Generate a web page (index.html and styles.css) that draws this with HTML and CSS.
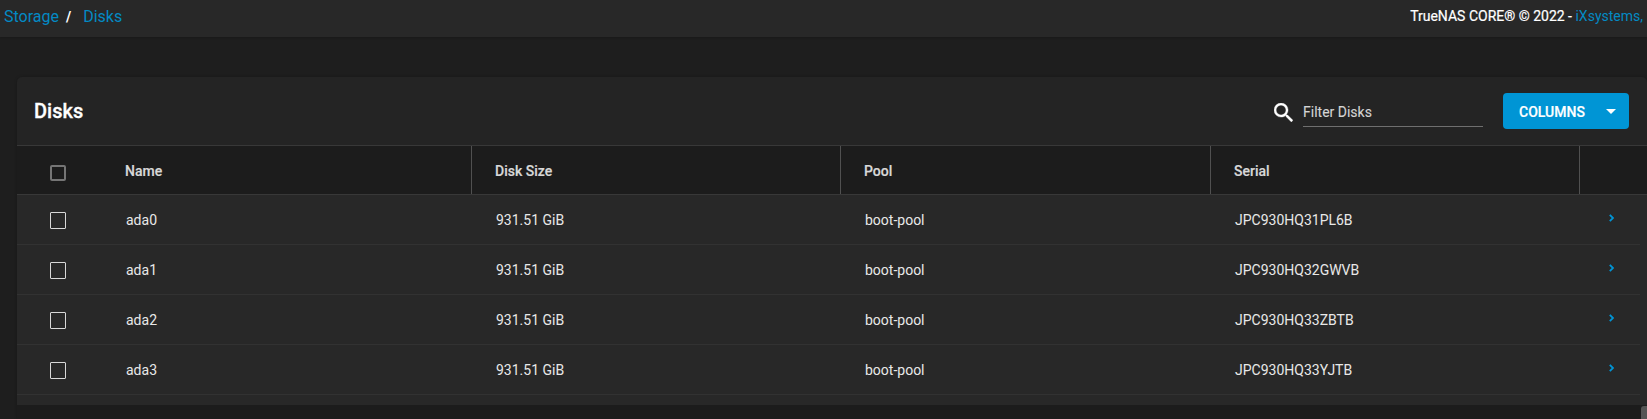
FILE: index.html
```html
<!DOCTYPE html>
<html lang="en">
<head>
<meta charset="utf-8">
<title>Disks</title>
<link rel="stylesheet" href="styles.css">
</head>
<body>
<header class="topbar">
  <nav class="breadcrumb"><a>Storage</a><span class="sep">/</span><a>Disks</a></nav>
  <div class="copyright">TrueNAS CORE® © 2022 - <a>iXsystems,</a></div>
</header>
<main class="card">
  <div class="toolbar">
    <h1>Disks</h1>
    <svg class="search" viewBox="3 3 17.5 17.5"><path fill="#fff" stroke="#fff" stroke-width=".3" d="M15.5 14h-.79l-.28-.27A6.471 6.471 0 0 0 16 9.5 6.5 6.5 0 1 0 9.5 16c1.61 0 3.09-.59 4.23-1.57l.27.28v.79l5 4.99L20.49 19l-4.99-5zm-6 0C7.01 14 5 11.99 5 9.5S7.01 5 9.5 5 14 7.01 14 9.5 11.99 14 9.5 14z"/></svg>
    <div class="filter">Filter Disks</div>
    <div class="button"><span>COLUMNS</span><i class="caret"></i></div>
  </div>
  <div class="row head">
    <div class="check"><i class="box"></i></div>
    <div class="cell name">Name</div><div class="cell">Disk Size</div><div class="cell">Pool</div><div class="cell">Serial</div><div class="end"></div>
  </div>
  <div class="body">
    <div class="row"><div class="check"><i class="box"></i></div><div class="cell name">ada0</div><div class="cell">931.51 GiB</div><div class="cell">boot-pool</div><div class="cell">JPC930HQ31PL6B</div><div class="end"><svg class="chev" viewBox="0 0 5 8"><path d="M.8.8 4 4 .8 7.2"/></svg></div></div>
    <div class="row"><div class="check"><i class="box"></i></div><div class="cell name">ada1</div><div class="cell">931.51 GiB</div><div class="cell">boot-pool</div><div class="cell">JPC930HQ32GWVB</div><div class="end"><svg class="chev" viewBox="0 0 5 8"><path d="M.8.8 4 4 .8 7.2"/></svg></div></div>
    <div class="row"><div class="check"><i class="box"></i></div><div class="cell name">ada2</div><div class="cell">931.51 GiB</div><div class="cell">boot-pool</div><div class="cell">JPC930HQ33ZBTB</div><div class="end"><svg class="chev" viewBox="0 0 5 8"><path d="M.8.8 4 4 .8 7.2"/></svg></div></div>
    <div class="row"><div class="check"><i class="box"></i></div><div class="cell name">ada3</div><div class="cell">931.51 GiB</div><div class="cell">boot-pool</div><div class="cell">JPC930HQ33YJTB</div><div class="end"><svg class="chev" viewBox="0 0 5 8"><path d="M.8.8 4 4 .8 7.2"/></svg></div></div>
  </div>
  <div class="foot"><i class="thumb"></i></div>
</main>
</body>
</html>
```
FILE: styles.css
```css
* { box-sizing: border-box; }
body {
  margin: 0;
  height: 419px;
  overflow: hidden;
  background: #1e1e1e;
  color: #fff;
  font-family: Roboto, sans-serif;
  font-size: 14px;
}
a { color: #0095d5; opacity: .9; }
.topbar {
  height: 37px;
  display: flex;
  justify-content: space-between;
  background: #282828;
  box-shadow: 0 1px 2px rgba(0, 0, 0, .2);
}
.breadcrumb { padding-left: 4px; font-size: 16px; line-height: 33px; white-space: nowrap; }
.sep { margin: 0 12px 0 7px; font-size: 14px; font-weight: 700; }
.copyright { padding-right: 4px; line-height: 32px; white-space: nowrap; -webkit-text-stroke: .2px; }
.copyright a { -webkit-text-stroke: 0; }
.card {
  margin: 40px 0 0 17px;
  height: 342px;
  background: #242424;
  border-radius: 5px 5px 0 0;
  box-shadow: 0 0 3px rgba(0, 0, 0, .25);
}
.toolbar { height: 68px; display: flex; align-items: flex-start; padding: 16px 18px 0 17px; }
h1 { flex: 1; margin: 0; font-size: 20px; line-height: 36px; font-weight: 500; -webkit-text-stroke: .3px; }
.search { width: 19px; height: 19px; margin: 10px 10px 0 0; }
.filter { width: 180px; height: 34px; line-height: 38px; border-bottom: 1px solid #6f6f6f; color: #d4d4d4; -webkit-text-stroke: .1px; }
.button {
  width: 126px;
  height: 36px;
  margin-left: 20px;
  padding: 1px 13px 0 16px;
  display: flex;
  align-items: center;
  justify-content: space-between;
  border-radius: 4px;
  background: #0095d5;
  font-weight: 500;
  -webkit-text-stroke: .2px;
}
.caret { border: 5px solid transparent; border-top-color: #fff; border-bottom: 0; }
.row {
  display: grid;
  grid-template-columns: 85px 369px 369px 370px 369px 1fr;
  height: 50px;
  margin-right: 7px;
  border-bottom: 1px solid #323232;
  color: #e8e8e8;
}
.head {
  grid-template-rows: 48px;
  margin-right: 0;
  background: #1c1c1c;
  border-top: 1px solid #383838;
  border-bottom-color: #383838;
  color: #d8d8d8;
  font-weight: 500;
  -webkit-text-stroke: .2px;
}
.check { padding: 17px 0 0 33px; }
.box { display: block; width: 16px; height: 17px; border: 1px solid #d8d8d8; border-radius: 1px; }
.head .check { padding-top: 19px; }
.head .box { height: 16px; border: 2px solid #757575; border-radius: 2px; }
.cell { padding-left: 25px; line-height: 50px; }
.name { padding-left: 24px; }
.head .cell { border-left: 1px solid #505050; padding-left: 23px; }
.head .name { border-left-color: transparent; padding-left: 22px; }
.end { padding: 19px 0 0 30px; }
.head .end { border-left: 1px solid #505050; }
.chev { display: block; width: 5px; height: 8px; fill: none; stroke: #0095d5; stroke-width: 1.8; }
.body { height: 210px; background: #282828; }
.foot { height: 14px; background: #1c1c1c; display: flex; justify-content: flex-end; padding-top: 1px; }
.thumb { width: 6px; height: 13px; background: #555; border-radius: 3px 0 0 0; }
```
